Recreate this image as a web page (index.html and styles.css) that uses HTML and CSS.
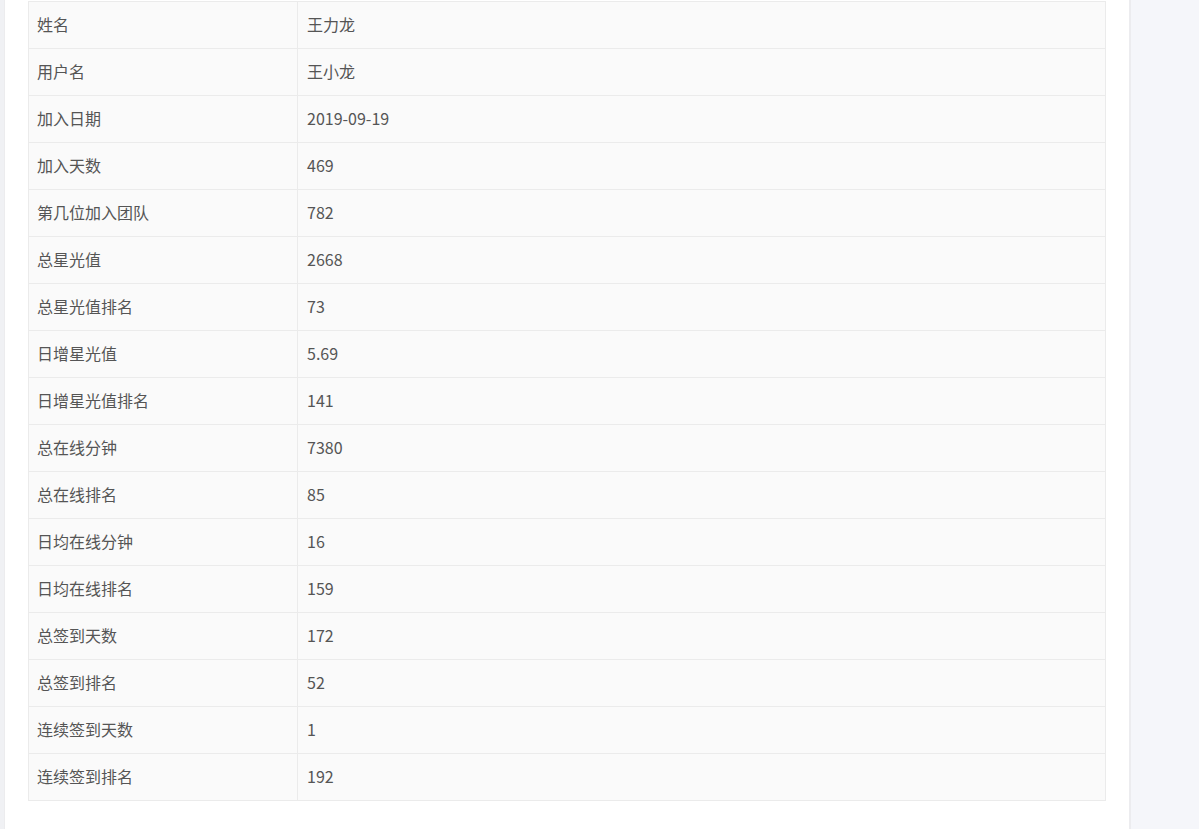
FILE: index.html
```html
<!DOCTYPE html>
<html lang="zh">
<head>
<meta charset="utf-8">
<link rel="stylesheet" href="styles.css">
</head>
<body>
<div class="page">
  <div class="card">
    <table class="info">
      <tbody>
        <tr><td class="k">姓名</td><td class="v">王力龙</td></tr>
        <tr><td class="k">用户名</td><td class="v">王小龙</td></tr>
        <tr><td class="k">加入日期</td><td class="v">2019-09-19</td></tr>
        <tr><td class="k">加入天数</td><td class="v">469</td></tr>
        <tr><td class="k">第几位加入团队</td><td class="v">782</td></tr>
        <tr><td class="k">总星光值</td><td class="v">2668</td></tr>
        <tr><td class="k">总星光值排名</td><td class="v">73</td></tr>
        <tr><td class="k">日增星光值</td><td class="v">5.69</td></tr>
        <tr><td class="k">日增星光值排名</td><td class="v">141</td></tr>
        <tr><td class="k">总在线分钟</td><td class="v">7380</td></tr>
        <tr><td class="k">总在线排名</td><td class="v">85</td></tr>
        <tr><td class="k">日均在线分钟</td><td class="v">16</td></tr>
        <tr><td class="k">日均在线排名</td><td class="v">159</td></tr>
        <tr><td class="k">总签到天数</td><td class="v">172</td></tr>
        <tr><td class="k">总签到排名</td><td class="v">52</td></tr>
        <tr><td class="k">连续签到天数</td><td class="v">1</td></tr>
        <tr><td class="k">连续签到排名</td><td class="v">192</td></tr>
      </tbody>
    </table>
  </div>
</div>
</body>
</html>
```
FILE: styles.css
```css
html, body {
  margin: 0;
  padding: 0;
  height: 100%;
}
body {
  background: #f5f6fa;
  font-family: "Noto Sans CJK SC", "Noto Sans", sans-serif;
  overflow: hidden;
}
.page {
  display: flex;
  min-height: 100%;
  padding-left: 4px;
  background: linear-gradient(to right, #f0f1f4 0, #f0f1f4 4px, transparent 4px);
}
.card {
  background: #ffffff;
  width: 1078px;
  padding: 1px 23px 28px 23px;
  border-left: 1px solid #ececee;
  border-right: 2px solid #ececef;
  min-height: 800px;
}
.info {
  width: 1078px;
  border-collapse: collapse;
  background: #fafafa;
  border: 1px solid #ebebeb;
  font-size: 16px;
  color: #555555;
}
.info td {
  height: 44px;
  padding: 0 9px 2px 9px;
  border: 1px solid #ebebeb;
  line-height: 20px;
  vertical-align: middle;
}
.info td.k {
  width: 251px;
  padding-left: 8px;
}
```
